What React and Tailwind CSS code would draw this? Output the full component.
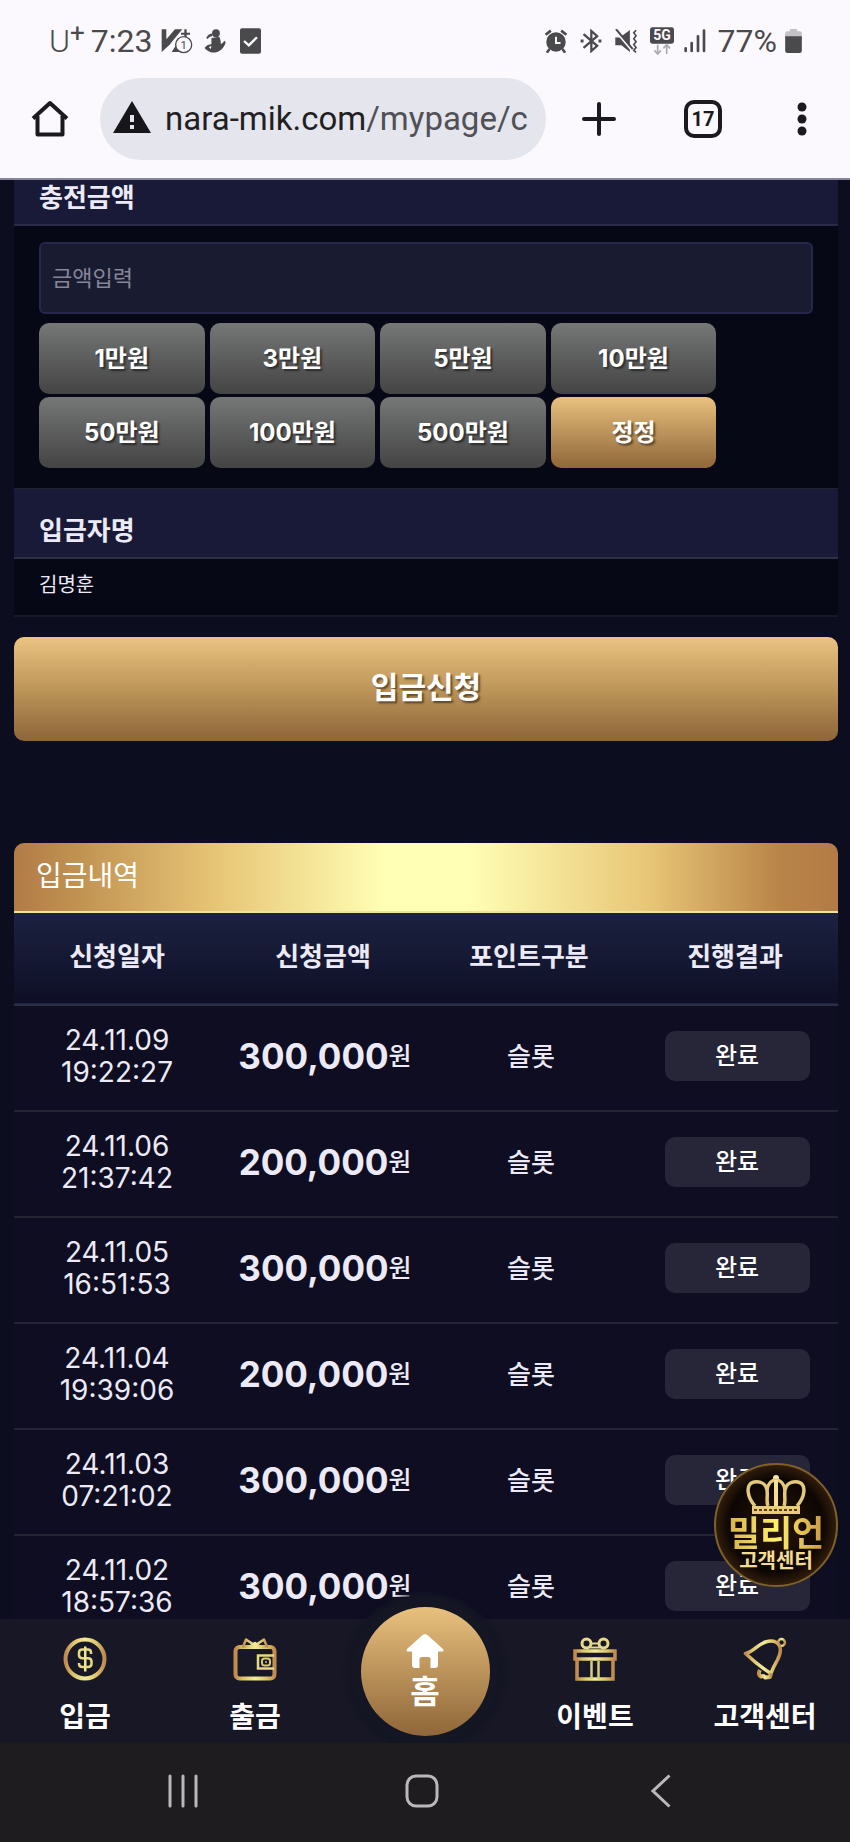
import { useState } from 'react'

const amounts = [
  { label: '1만원', value: 10000 },
  { label: '3만원', value: 30000 },
  { label: '5만원', value: 50000 },
  { label: '10만원', value: 100000 },
  { label: '50만원', value: 500000 },
  { label: '100만원', value: 1000000 },
  { label: '500만원', value: 5000000 },
]

const history = [
  { date: '24.11.09', time: '19:22:27', amount: '300,000' },
  { date: '24.11.06', time: '21:37:42', amount: '200,000' },
  { date: '24.11.05', time: '16:51:53', amount: '300,000' },
  { date: '24.11.04', time: '19:39:06', amount: '200,000' },
  { date: '24.11.03', time: '07:21:02', amount: '300,000' },
  { date: '24.11.02', time: '18:57:36', amount: '300,000' },
]

function GoldGradient({ id }) {
  return (
    <defs>
      <linearGradient id={id} x1="0" y1="0" x2="1" y2="0">
        <stop offset="0" stopColor="#c08a50" />
        <stop offset="0.2" stopColor="#dcc36c" />
        <stop offset="0.5" stopColor="#f3ec9c" />
        <stop offset="0.8" stopColor="#dcc36c" />
        <stop offset="1" stopColor="#c08a50" />
      </linearGradient>
    </defs>
  )
}

function CoinIcon() {
  return (
    <svg viewBox="0 0 44 44" className="h-11 w-11" fill="none" stroke="url(#coin)">
      <GoldGradient id="coin" />
      <circle cx="22" cy="22" r="19.500" strokeWidth="4" />
      <path d="M28 17v-1.500c0-2-1.200-3-3-3h-5.500c-2 0-3.500 1.200-3.500 3.200v2.300c0 2 1.500 3.200 3.500 3.200h5.500c2 0 3.500 1.200 3.500 3.300v2.300c0 2-1.500 3.200-3.500 3.200h-5.500c-2 0-3.500-1-3.500-3V26" stroke="#e6d97f" strokeWidth="2.500" />
      <path d="M21 9.500h2.500v25H21z" fill="#efe690" stroke="none" />
    </svg>
  )
}

function WalletIcon() {
  return (
    <svg viewBox="0 0 44 44" className="h-11 w-11" fill="none" stroke="url(#wallet)" strokeWidth="3">
      <GoldGradient id="wallet" />
      <rect x="2.500" y="10" width="39" height="31.500" rx="4" strokeWidth="4" />
      <path d="M10 9.500 13 2.500l9 6 9-6 3 7zM17 9.500l5-3.500 5 3.500" strokeWidth="2.500" strokeLinejoin="round" />
      <path d="M41 18.500H25v13h16" stroke="#e6d97f" strokeWidth="2.500" />
      <rect x="29" y="21.500" width="8" height="7" rx="2.500" stroke="#d9c870" strokeWidth="2" />
      <circle cx="33" cy="25" r="1" fill="#d9c870" stroke="none" />
    </svg>
  )
}

function GiftIcon() {
  return (
    <svg viewBox="0 0 44 44" className="h-11 w-11" fill="none" stroke="url(#gift)" strokeWidth="3">
      <GoldGradient id="gift" />
      <circle cx="13.500" cy="6.500" r="4.500" stroke="#e6d98a" />
      <circle cx="30.500" cy="6.500" r="4.500" stroke="#e6d98a" />
      <path d="M17 9.500h10v2H17zM19 5.500h6v2h-6z" fill="#e6d98a" stroke="none" />
      <rect x="2" y="14" width="40" height="8" strokeWidth="3.500" />
      <path d="M4 22v20h36V22" strokeWidth="3.500" />
      <path d="M18.500 24v18M25.500 24v18" stroke="#d9cd7d" strokeWidth="2.500" />
    </svg>
  )
}

function BellIcon() {
  return (
    <svg viewBox="0 0 44 44" className="h-11 w-11" fill="none" stroke="url(#bell)" strokeWidth="3.500" strokeLinejoin="round">
      <GoldGradient id="bell" />
      <circle cx="38.500" cy="5.500" r="3.500" strokeWidth="2.500" />
      <path d="M2.500 16.500c8-1.500 12-9 20-11.500 6-2 11-.5 13.500 3 3 4.500 1 10-1.500 15-2.500 4.500-5 8.500-6.500 13.500C19 31 11 24.500 2.500 16.500z" />
      <path d="M17 33c-2 3-1 6 1 6.500 2-1 3-.5 4 1l5-.5 1-4" strokeWidth="4" />
    </svg>
  )
}

function Crown() {
  return (
    <svg viewBox="0 0 60 40" className="h-10 w-[60px]" fill="none" stroke="#e3c97c" strokeWidth="3.500">
      <circle cx="30" cy="3" r="3" fill="#f3ec9c" stroke="none" />
      <path d="M9 31C1 22-1 9 8 7c7-1 12 2 13 8 1 6-1 11 1 16" />
      <path d="M51 31c8-9 10-22 1-24-7-1-12 2-13 8-1 6 1 11-1 16" />
      <path d="M21 15C22 8 26 5 30 5s8 3 9 10" />
      <path d="M30 5v26" stroke="#f3e096" strokeWidth="4" />
      <rect x="6" y="31" width="48" height="8" fill="#e8cc78" stroke="none" />
      <path d="M8 35h44" stroke="#5c3d14" strokeWidth="2" strokeDasharray="3 2" />
    </svg>
  )
}

function StatusBar() {
  return (
    <div className="flex items-center justify-between pt-[23px] pr-12 pl-[49px] text-[#4a494c]">
      <div className="flex h-9 items-center font-[Roboto,sans-serif] text-[32px] leading-9">
        <span className="font-light">U</span>
        <span className="-mt-4 text-[26px]">+</span>
        <span className="ml-[6px]">7:23</span>
        {/* app notification with a count of one */}
        <svg viewBox="0 0 96 78" className="ml-2 h-[26px] w-8" fill="#4a494c">
          <path d="M2 4h14v30L42 4h22L34 40l-8 10L2 72z" />
          <path d="M70 4h7v10h10v6H77v8h-7v-8H60v-6h10zM32 72l14-22 8 22z" />
          <circle cx="68" cy="50" r="24" fill="#fbf9fe" stroke="#4a494c" strokeWidth="4" />
          <text x="68" y="62" textAnchor="middle" fontSize="34" fontFamily="Roboto">1</text>
        </svg>
        <svg viewBox="0 0 66 74" className="ml-[11px] h-6 w-[22px]" fill="#4a494c">
          <circle cx="36" cy="13" r="12" />
          <path d="M6 28c4-10 12-14 20-14l-2 8c-6 0-10 3-14 9zM22 28l24-4c4 8 5 15 5 22 5-1 8-5 10-10l5 4c-2 12-10 22-20 28-8 5-20 6-28 3-8-4-15-8-17-13l8-8 13-4z" />
          <path d="M14 56l8-4-2 10z" fill="#fbf9fe" />
        </svg>
        <svg viewBox="0 0 62 76" className="ml-[14px] h-[26px] w-[21px]">
          <rect width="62" height="76" rx="6" fill="#4a494c" />
          <path d="M12 38l14 13 24-24" fill="none" stroke="#fbf9fe" strokeWidth="7" />
        </svg>
      </div>
      <div className="flex h-9 items-center font-[Roboto,sans-serif] text-[32px] leading-9">
        <svg viewBox="0 0 72 74" className="h-6 w-6" fill="#4a494c">
          <circle cx="36" cy="40" r="30" />
          <path d="M4 18 20 5M68 18 52 5M16 62 8 73M56 62l8 11" stroke="#4a494c" strokeWidth="8" />
          <path d="M36 24v19h14" fill="none" stroke="#fbf9fe" strokeWidth="6" />
        </svg>
        <svg viewBox="0 0 66 74" className="ml-3 h-6 w-[22px]" fill="none" stroke="#4a494c" strokeWidth="7">
          <path d="M10 16l42 36-18 16V6l18 16L10 58" />
          <path d="M1 37h9M56 37h9" strokeWidth="9" />
        </svg>
        <svg viewBox="0 0 72 74" className="ml-3 h-6 w-6" fill="#4a494c">
          <path d="M3 26h14L48 3v68L22 50H3z" />
          <path d="M1 3l52 62" stroke="#fbf9fe" strokeWidth="6" />
          <path d="M5 0l52 62" stroke="#4a494c" strokeWidth="6" />
          <path d="M67 4l-7 8 7 9-7 9 7 9-7 9 7 9-7 9 7 6" fill="none" stroke="#4a494c" strokeWidth="5" />
        </svg>
        <svg viewBox="0 0 72 82" className="ml-3 h-7 w-6">
          <rect width="72" height="49" rx="7" fill="#4a494c" />
          <text x="36" y="39" textAnchor="middle" fontSize="42" fontWeight="700" fontFamily="Roboto" fill="#fbf9fe">5G</text>
          <path d="M23 52v26M13 69l10 11 10-11M50 80V54M40 63l10-11 10 11" fill="none" stroke="#aaa9ad" strokeWidth="5" />
        </svg>
        <svg viewBox="0 0 66 72" className="ml-[10px] h-6 w-[22px]" stroke="#4a494c" strokeWidth="8" strokeLinecap="round">
          <path d="M5 58v8M23 42v24M42 22v44" />
          <path d="M60 5v61" />
        </svg>
        <span className="ml-3">77%</span>
        <svg viewBox="0 0 50 72" className="ml-2 h-6 w-[17px]">
          <path d="M14 0h22v7h8q6 0 6 6v20H0V13q0-6 6-6h8z" fill="#c3c1c6" />
          <path d="M0 22h50v43q0 7-7 7H7q-7 0-7-7z" fill="#4a494c" />
        </svg>
      </div>
    </div>
  )
}

function BrowserBar() {
  return (
    <div className="flex items-center py-[19px] pb-[18px]">
      <button type="button" aria-label="Home" className="flex w-[100px] shrink-0 justify-center">
        <svg viewBox="0 0 38 38" className="h-[38px] w-[38px]" fill="none" stroke="#1b1a1f" strokeWidth="4" strokeLinejoin="round">
          <path d="M2 18.500 19 3l17 15.500M6.500 16v18.500h25V16" />
        </svg>
      </button>
      <button type="button" className="flex h-[82px] min-w-0 flex-1 items-center rounded-full bg-[#e5e5ed] pl-[13px] text-left">
        <svg viewBox="0 0 38 32" className="mb-1 h-8 w-[38px] shrink-0">
          <path d="M19 0l19 32H0z" fill="#16161b" />
          <path d="M19 14v7M19 24v4" stroke="#e5e5ed" strokeWidth="4" />
        </svg>
        <span className="ml-[14px] overflow-hidden font-[Roboto,sans-serif] text-[33px] whitespace-nowrap text-[#1f1f24]">
          nara-mik.com<span className="text-[#505056]">/mypage/c</span>
        </span>
      </button>
      <button type="button" aria-label="New tab" className="flex w-[106px] shrink-0 justify-center">
        <svg viewBox="0 0 34 34" className="h-[34px] w-[34px]" stroke="#1b1a1f" strokeWidth="4" strokeLinecap="round">
          <path d="M17 2v30M2 17h30" />
        </svg>
      </button>
      <button type="button" aria-label="Tabs" className="flex w-[102px] shrink-0 justify-center">
        <span className="flex h-[38px] w-[38px] items-center justify-center rounded-[10px] border-4 border-[#1b1a1f] font-[Roboto,sans-serif] text-[20px] font-bold text-[#1b1a1f]">
          17
        </span>
      </button>
      <button type="button" aria-label="Menu" className="flex w-24 shrink-0 justify-center">
        <svg viewBox="0 0 10 34" className="h-[34px] w-[10px]" fill="#1b1a1f">
          <circle cx="5" cy="5" r="4.500" />
          <circle cx="5" cy="17" r="4.500" />
          <circle cx="5" cy="29" r="4.500" />
        </svg>
      </button>
    </div>
  )
}

function NavItem({ icon, label }) {
  return (
    <a href="#" className="flex flex-1 flex-col items-center pt-[18px] whitespace-nowrap">
      {icon}
      <span className="mt-[18px] text-[28px] leading-9 font-bold text-white">{label}</span>
    </a>
  )
}

export default function App() {
  const [amount, setAmount] = useState('')

  const addAmount = (value) => {
    setAmount(String(Number(amount || 0) + value))
  }

  return (
    <div className="flex h-screen flex-col bg-[#0c0d1f] font-[Inter,'Noto_Sans_CJK_KR',sans-serif] text-[#eceaf6]">
      <header className="shrink-0 border-b-2 border-[#85849a] bg-[#fbf9fe]">
        <StatusBar />
        <BrowserBar />
      </header>

      <div className="relative min-h-0 flex-1">
        <main className="h-full overflow-y-auto pr-3 pl-[14px] [scrollbar-width:none]">
          {/* the page is scrolled a little, so the first heading starts above the fold */}
          <section className="-mt-6 bg-[#060815]">
            <h2 className="border-b-2 border-[#2b2b48] bg-[#181a37] px-[25px] pt-6 pb-2 text-[26px] leading-9 font-bold">
              <label htmlFor="amount">충전금액</label>
            </h2>
            <div className="px-[25px] pt-4 pb-5">
              <input
                id="amount"
                type="text"
                inputMode="numeric"
                placeholder="금액입력"
                value={amount}
                onChange={(e) => setAmount(e.target.value)}
                className="h-[72px] w-full rounded-md border-2 border-[#26274a] bg-[#191b30] px-[11px] text-[22px] placeholder:text-[#85869a]"
              />
              <div className="mt-[9px] grid w-7/8 grid-cols-4 gap-x-[5px] gap-y-[3px]">
                {amounts.map((item) => (
                  <button
                    key={item.value}
                    type="button"
                    onClick={() => addAmount(item.value)}
                    className="h-[71px] rounded-[10px] bg-linear-to-b from-[#767877] to-[#434443] text-[24px] font-bold text-white text-shadow-[2px_2px_2px_#00000080]"
                  >
                    {item.label}
                  </button>
                ))}
                <button
                  type="button"
                  onClick={() => setAmount('')}
                  className="h-[71px] rounded-[10px] bg-linear-to-b from-[#e9c17e] to-[#8f6739] text-[24px] font-bold text-white text-shadow-[2px_2px_2px_#00000080]"
                >
                  정정
                </button>
              </div>
            </div>
            <h2 className="border-t border-b-2 border-t-[#22232f] border-b-[#2f3048] bg-[#181a37] px-[25px] pt-6 pb-2 text-[26px] leading-9 font-bold">
              입금자명
            </h2>
            <p className="border-b-2 border-[#171a26] px-[25px] pt-[10px] pb-[14px] text-[20px] leading-8">김명훈</p>
          </section>

          <button
            type="button"
            className="mt-5 h-[104px] w-full rounded-[10px] bg-linear-to-b from-[#ebc482] via-[#bd9659] to-[#8d653a] pb-1 text-[30px] font-bold text-white text-shadow-[2px_2px_2px_#00000080]"
          >
            입금신청
          </button>

          <section className="mt-[102px]">
            <h2 className="rounded-t-[10px] border-b-2 border-[#f3dfa0] bg-[linear-gradient(90deg,#b27b46_0%,#c19352_8%,#e8c677_25%,#ffffb5_45%,#ffffb5_55%,#e8c677_77%,#b98448_93%,#b27b46_100%)] px-[22px] pt-[15px] pb-[17px] text-[28px] leading-9 text-white">
              입금내역
            </h2>
            <table className="w-full table-fixed border-collapse text-center">
              <thead>
                <tr className="h-[92px] border-b-2 border-[#2c2e44] bg-linear-to-b from-[#1b2240] to-[#0e0f26] text-[26px]">
                  <th className="pb-1 font-bold">신청일자</th>
                  <th className="pb-1 font-bold">신청금액</th>
                  <th className="pb-1 font-bold">포인트구분</th>
                  <th className="pb-1 font-bold">진행결과</th>
                </tr>
              </thead>
              <tbody>
                {history.map((row) => (
                  <tr key={row.date} className="h-[106px] border-b-2 border-[#222333] bg-[#0e0d22]">
                    <td className="pb-1 text-[28px] leading-8">
                      {row.date}
                      <br />
                      {row.time}
                    </td>
                    <td className="pb-1 whitespace-nowrap">
                      <div className="flex items-center justify-center pl-1">
                        <span className="text-[35px] leading-10 font-bold">{row.amount}</span>
                        <span className="text-[25px] leading-10 font-medium">원</span>
                      </div>
                    </td>
                    <td className="pb-1 pl-1 text-[26px] font-medium">슬롯</td>
                    <td className="pb-1 pl-1">
                      <span className="mx-auto flex h-[50px] w-[145px] items-center justify-center rounded-[10px] bg-[#262638] text-[24px] font-medium text-white">
                        완료
                      </span>
                    </td>
                  </tr>
                ))}
              </tbody>
            </table>
          </section>
        </main>

        <a
          href="#"
          className="absolute right-3 bottom-8 flex h-[124px] w-[124px] flex-col items-center rounded-full border-2 border-[#7d6128] bg-[radial-gradient(circle,#2a1608_0%,#0c0603_55%,#4a2c10_82%,#1c1008_100%)] pt-[10px] font-bold whitespace-nowrap"
        >
          <Crown />
          <span className="bg-linear-to-r from-[#d9ae4f] via-[#fff26a] to-[#c99840] bg-clip-text text-[35px] leading-9 text-transparent">
            밀리언
          </span>
          <span className="text-[20px] leading-5 text-[#f2dc94]">고객센터</span>
        </a>
      </div>

      <nav className="relative flex h-[124px] shrink-0 bg-[#171726]">
        <NavItem icon={<CoinIcon />} label="입금" />
        <NavItem icon={<WalletIcon />} label="출금" />
        <div className="flex flex-1 justify-center">
          <a
            href="#"
            className="-mt-3 flex h-[129px] w-[129px] shrink-0 flex-col items-center rounded-full bg-linear-to-b from-[#e9c17e] to-[#8f6739] pt-[27px] text-[32px] leading-10 font-bold text-white shadow-[0_0_4px_14px_#141624]"
          >
            <svg viewBox="0 0 38 34" className="mb-1 h-[34px] w-[38px]" fill="#fff">
              <path d="M19 0q1.500 0 3 1.500L37 15q1 1 0 2.500h-5V31q0 3-3 3h-4.500V25q0-2-2-2h-7q-2 0-2 2v9H9q-3 0-3-3V17.500H1Q0 16 1 15L16 1.500Q17.500 0 19 0z" />
            </svg>
            홈
          </a>
        </div>
        <NavItem icon={<GiftIcon />} label="이벤트" />
        <NavItem icon={<BellIcon />} label="고객센터" />
      </nav>

      <footer className="relative grid h-[99px] shrink-0 grid-cols-3 items-center justify-items-center bg-[#1e1c1f] pr-[70px] pb-1 pl-16">
        <button type="button" aria-label="Recent apps">
          <svg viewBox="0 0 30 34" className="h-[34px] w-[30px]" stroke="#b9b8bb" strokeWidth="3" strokeLinecap="round">
            <path d="M2 2v30M15 2v30M28 2v30" />
          </svg>
        </button>
        <button type="button" aria-label="Home screen">
          <svg viewBox="0 0 34 34" className="h-[34px] w-[34px]" fill="none" stroke="#b9b8bb" strokeWidth="3">
            <rect x="2" y="2" width="30" height="30" rx="9" />
          </svg>
        </button>
        <button type="button" aria-label="Back">
          <svg viewBox="0 0 20 34" className="h-[34px] w-5" fill="none" stroke="#b9b8bb" strokeWidth="3">
            <path d="M18.500 1.500 2 17l16.500 15.500" />
          </svg>
        </button>
      </footer>
    </div>
  )
}
